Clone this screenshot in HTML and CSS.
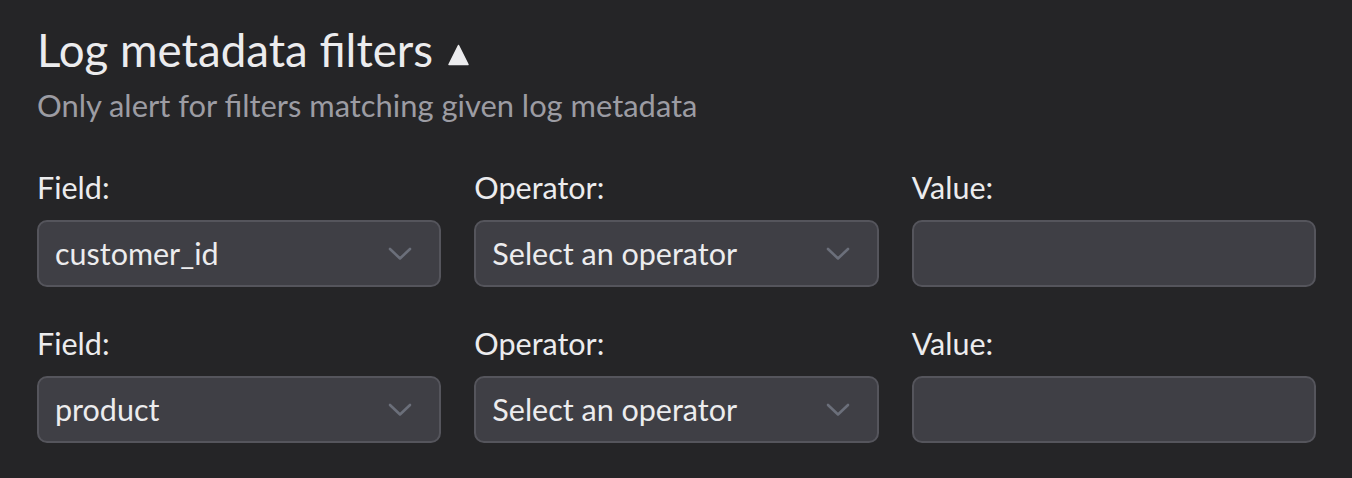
FILE: index.html
```html
<!DOCTYPE html>
<html lang="en">
<head>
<meta charset="utf-8">
<title>Log metadata filters</title>
<link rel="stylesheet" href="styles.css">
</head>
<body>
<section class="panel">
  <header class="head">
    <h1 class="title">Log metadata filters
      <svg class="caret" width="21" height="22" viewBox="0 0 21 22" aria-hidden="true"><path d="M10.5 1.5 L20 20.5 L1 20.5 Z" fill="#ececee" stroke="#ececee" stroke-width="1.5" stroke-linejoin="round"/></svg>
    </h1>
    <p class="subtitle">Only alert for filters matching given log metadata</p>
  </header>
  <div class="rows">
    <div class="row">
      <div class="field">
        <label class="label">Field:</label>
        <div class="control select"><span class="val">customer_id</span><svg class="chev" width="24" height="14" viewBox="0 0 24 14"><path d="M2 2 L12 11.5 L22 2" fill="none" stroke="#6b6f7a" stroke-width="2.6" stroke-linecap="round" stroke-linejoin="round"/></svg></div>
      </div>
      <div class="field">
        <label class="label">Operator:</label>
        <div class="control select"><span class="val">Select an operator</span><svg class="chev" width="24" height="14" viewBox="0 0 24 14"><path d="M2 2 L12 11.5 L22 2" fill="none" stroke="#6b6f7a" stroke-width="2.6" stroke-linecap="round" stroke-linejoin="round"/></svg></div>
      </div>
      <div class="field">
        <label class="label">Value:</label>
        <div class="control input"></div>
      </div>
    </div>
    <div class="row">
      <div class="field">
        <label class="label">Field:</label>
        <div class="control select"><span class="val">product</span><svg class="chev" width="24" height="14" viewBox="0 0 24 14"><path d="M2 2 L12 11.5 L22 2" fill="none" stroke="#6b6f7a" stroke-width="2.6" stroke-linecap="round" stroke-linejoin="round"/></svg></div>
      </div>
      <div class="field">
        <label class="label">Operator:</label>
        <div class="control select"><span class="val">Select an operator</span><svg class="chev" width="24" height="14" viewBox="0 0 24 14"><path d="M2 2 L12 11.5 L22 2" fill="none" stroke="#6b6f7a" stroke-width="2.6" stroke-linecap="round" stroke-linejoin="round"/></svg></div>
      </div>
      <div class="field">
        <label class="label">Value:</label>
        <div class="control input"></div>
      </div>
    </div>
  </div>
</section>
</body>
</html>
```
FILE: styles.css
```css
html, body {
  margin: 0;
  padding: 0;
  background: #252527;
}
body {
  font-family: Lato, "Open Sans", sans-serif;
  color: #ececee;
}
.panel {
  padding: 25px 36px 0 37px;
}
.head {
  display: flex;
  flex-direction: column;
}
.title {
  margin: 0;
  font-size: 45.7px;
  font-weight: 400;
  line-height: 50px;
  display: flex;
  align-items: flex-start;
  gap: 15px;
}
.caret {
  margin-top: 19px;
  flex: none;
}
.subtitle {
  margin: 11px 0 0;
  font-size: 30.9px;
  line-height: 40px;
  color: #9c9ca3;
}
.rows {
  display: flex;
  flex-direction: column;
  gap: 38px;
  margin-top: 43px;
}
.row {
  display: grid;
  grid-template-columns: repeat(3, 1fr);
  column-gap: 33px;
}
.field {
  display: flex;
  flex-direction: column;
  gap: 15px;
}
.label {
  font-size: 30.5px;
  line-height: 36px;
  color: #ececee;
}
.control {
  box-sizing: border-box;
  height: 67px;
  background: #3f3f45;
  border: 2px solid #55555c;
  border-radius: 10px;
  display: flex;
  align-items: center;
  padding: 0 27px 0 16px;
}
.select {
  justify-content: space-between;
}
.val {
  font-size: 30.5px;
  line-height: 37px;
  color: #ececee;
}
.chev {
  flex: none;
}
```
